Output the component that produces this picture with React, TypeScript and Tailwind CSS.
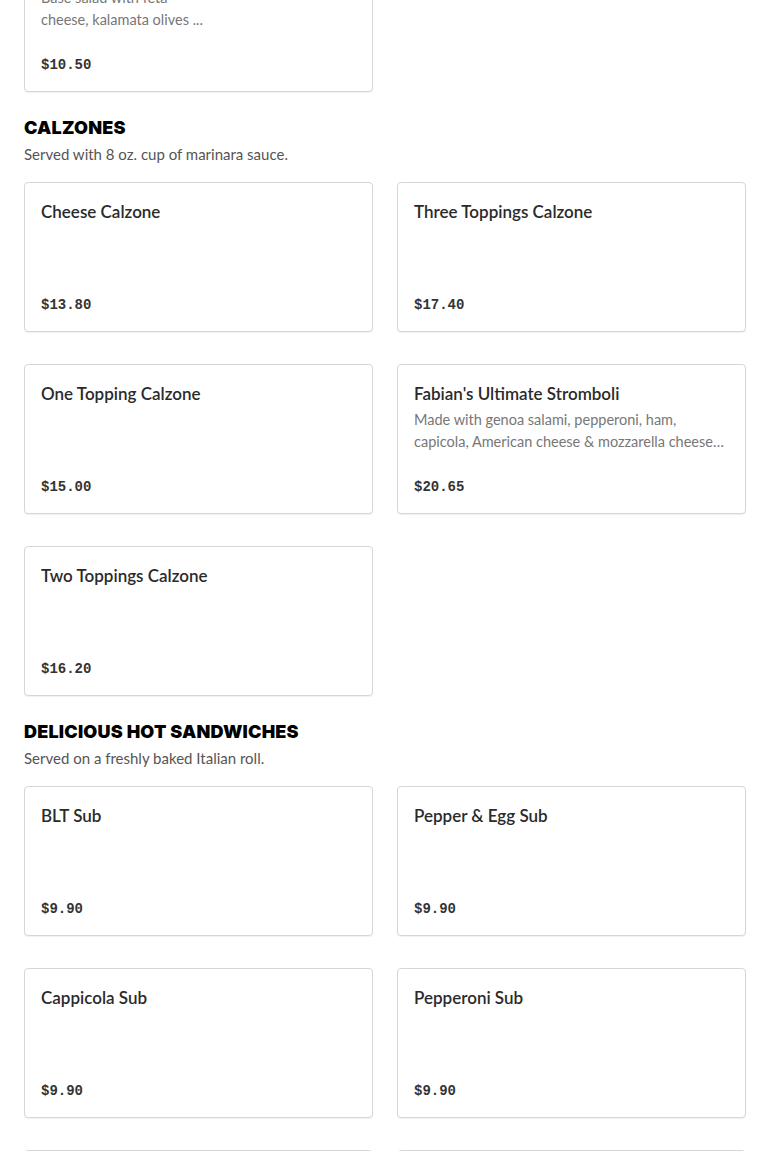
type Item = { name: string; desc?: string; price: string };

const sections: { title: string; note: string; items: Item[] }[] = [
  {
    title: "CALZONES",
    note: "Served with 8 oz. cup of marinara sauce.",
    items: [
      { name: "Cheese Calzone", price: "$13.80" },
      { name: "Three Toppings Calzone", price: "$17.40" },
      { name: "One Topping Calzone", price: "$15.00" },
      {
        name: "Fabian's Ultimate Stromboli",
        desc: "Made with genoa salami, pepperoni, ham, capicola, American cheese & mozzarella cheese and served with marinara sauce.",
        price: "$20.65",
      },
      { name: "Two Toppings Calzone", price: "$16.20" },
    ],
  },
  {
    title: "DELICIOUS HOT SANDWICHES",
    note: "Served on a freshly baked Italian roll.",
    items: [
      { name: "BLT Sub", price: "$9.90" },
      { name: "Pepper & Egg Sub", price: "$9.90" },
      { name: "Cappicola Sub", price: "$9.90" },
      { name: "Pepperoni Sub", price: "$9.90" },
      { name: "Meatball Sub", price: "$9.90" },
      { name: "Sausage Sub", price: "$9.90" },
    ],
  },
];

function Card({ item }: { item: Item }) {
  return (
    <div className="h-[150px] flex flex-col justify-between rounded border border-[#d6d6d6] bg-white px-4 pt-[17px] pb-4 shadow-[0_1px_1px_rgba(0,0,0,0.06)]">
      <div>
        <div className="text-[17px] leading-6 font-semibold text-[#2a2a2a]">{item.name}</div>
        {item.desc && (
          <div className="mt-[3px] text-[14.5px] leading-[22px] text-[#777] line-clamp-2 whitespace-pre-line">{item.desc}</div>
        )}
      </div>
      <div className="text-[14px] leading-5 font-bold text-[#333]" style={{ fontFamily: '"Liberation Mono", monospace' }}>
        {item.price}
      </div>
    </div>
  );
}

export default function App() {
  return (
    <div className="min-h-screen bg-white overflow-hidden" style={{ fontFamily: 'Lato, "Noto Sans", sans-serif' }}>
      <div className="px-6">
        <div className="grid grid-cols-2 gap-6 -mt-[58px]">
          <Card
            item={{
              name: "Greek Salad",
              desc: "Base salad with feta\ncheese, kalamata olives ...",
              price: "$10.50",
            }}
          />
        </div>
        {sections.map((s) => (
          <section key={s.title}>
            <h2
              className="mt-[22px] text-[18px] leading-7 font-black tracking-[0.2px] text-black"
              style={{ fontFamily: 'Inter, sans-serif' }}
            >
              {s.title}
            </h2>
            <p className="mt-[1px] text-[15px] leading-[22px] text-[#555]">{s.note}</p>
            <div className="mt-[17px] grid grid-cols-2 gap-x-6 gap-y-8">
              {s.items.map((it) => (
                <Card key={it.name} item={it} />
              ))}
            </div>
          </section>
        ))}
      </div>
    </div>
  );
}
